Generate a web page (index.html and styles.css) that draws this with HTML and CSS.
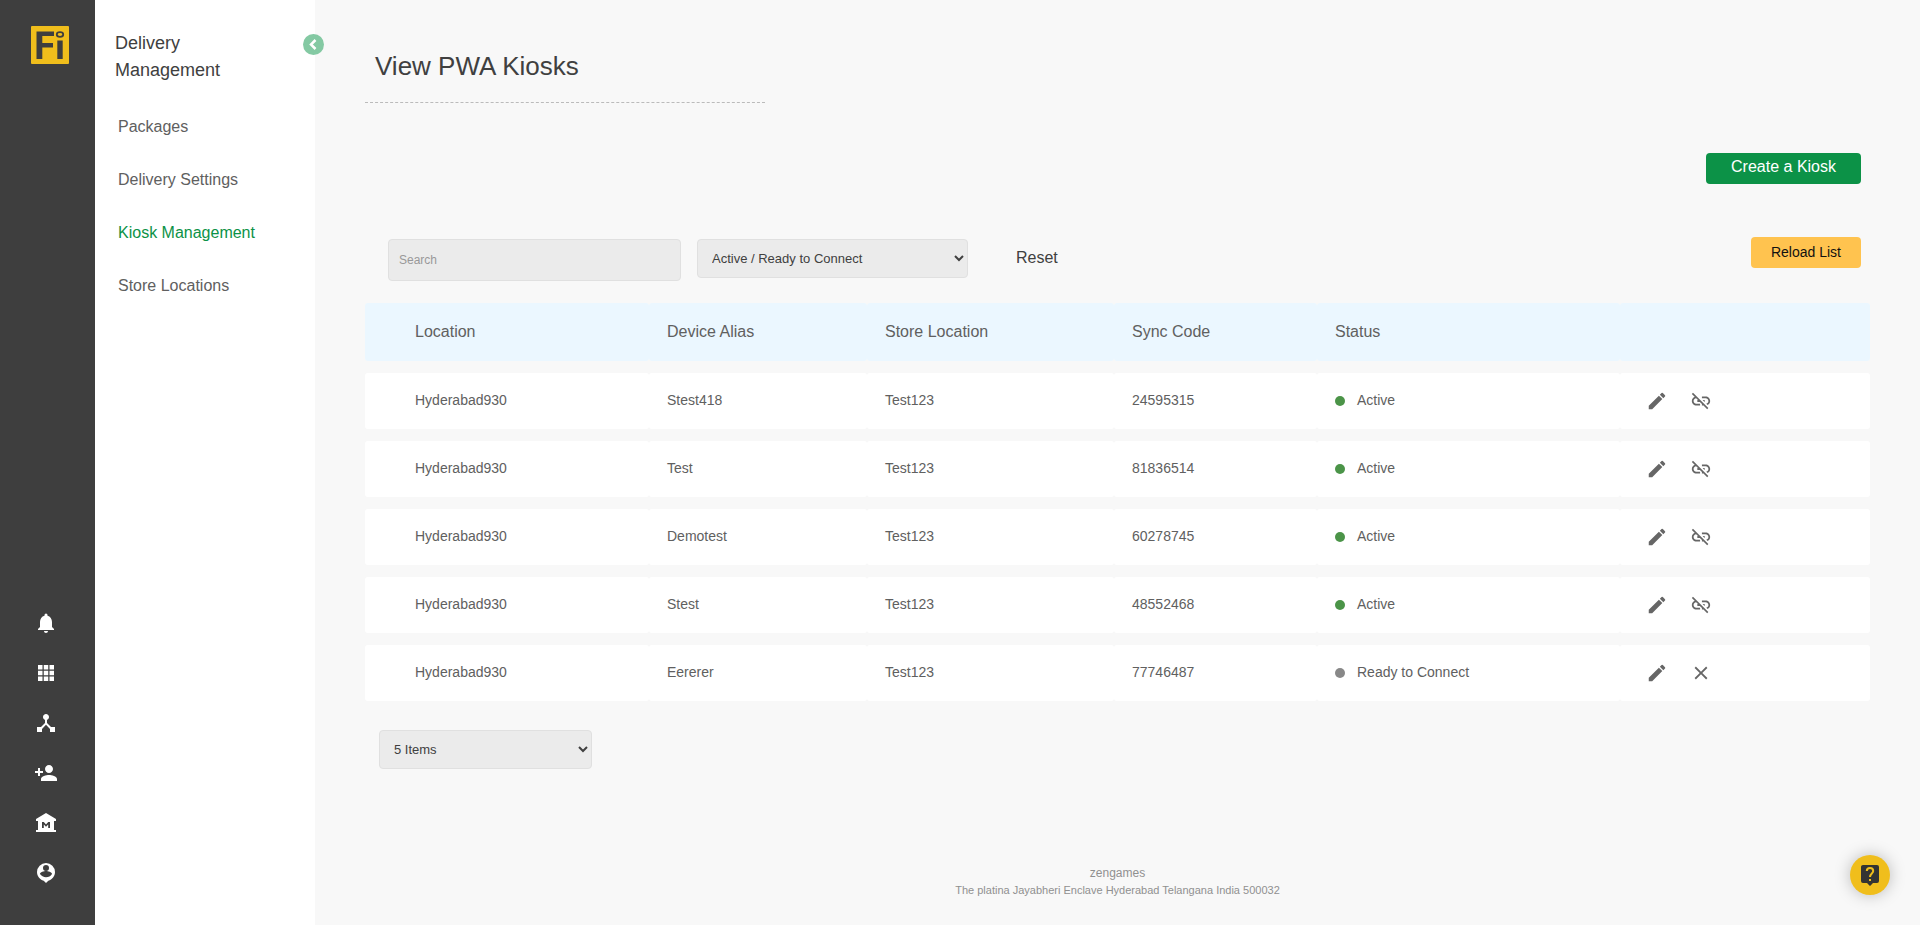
FILE: index.html
```html
<!DOCTYPE html>
<html lang="en">
<head>
<meta charset="utf-8">
<title>View PWA Kiosks</title>
<link rel="stylesheet" href="styles.css">
</head>
<body>
<svg class="sprite" aria-hidden="true">
  <symbol id="pencil" viewBox="0 0 24 24"><path d="M3 17.25V21h3.75L17.81 9.94l-3.75-3.75L3 17.25zM20.71 7.04a1 1 0 0 0 0-1.41l-2.34-2.34a1 1 0 0 0-1.41 0l-1.83 1.83 3.75 3.75 1.83-1.83z"/></symbol>
  <symbol id="unlink" viewBox="0 0 24 24"><path d="M17 7h-4v1.9h4c1.71 0 3.1 1.39 3.1 3.1 0 1.43-.98 2.63-2.31 2.98l1.46 1.46C20.88 15.61 22 13.95 22 12c0-2.76-2.24-5-5-5zm-1 4h-2.19l2 2H16v-2zM2 4.27l3.11 3.11C3.29 8.12 2 9.91 2 12c0 2.76 2.24 5 5 5h4v-1.9H7c-1.71 0-3.1-1.39-3.1-3.1 0-1.59 1.21-2.9 2.76-3.07L8.73 11H8v2h2.73L13 15.27V17h1.73l4.01 4L20 19.74 3.27 3 2 4.27z"/></symbol>
  <symbol id="cross" viewBox="0 0 24 24"><path d="M19 6.41 17.59 5 12 10.59 6.41 5 5 6.41 10.59 12 5 17.59 6.41 19 12 13.41 17.59 19 19 17.59 13.41 12z"/></symbol>
</svg>
<div class="app">
  <nav class="rail" aria-label="Main">
    <a class="logo" href="#" aria-label="Home">
      <svg width="38" height="38" viewBox="0 0 38 38"><rect width="38" height="38" rx="1" fill="#f0be1c"/><g fill="#3e3e3e"><path d="M5.500 5.500H23V10H11.300v7H22v4.500H11.300V33H5.500z"/><path d="M26.300 14.500h5.400V33h-5.400z"/></g><ellipse cx="29" cy="8.500" rx="3.200" ry="2.300" fill="none" stroke="#3e3e3e" stroke-width="1.800"/></svg>
    </a>
    <div class="rail-links">
      <a href="#" aria-label="Notifications"><svg viewBox="0 0 24 24"><path d="M12 22c1.100 0 2-.9 2-2h-4c0 1.100.89 2 2 2zm6-6v-5c0-3.070-1.640-5.640-4.500-6.320V4a1.500 1.500 0 0 0-3 0v.68C7.630 5.360 6 7.920 6 11v5l-2 2v1h16v-1l-2-2z"/></svg></a>
      <a href="#" aria-label="Apps"><svg viewBox="0 0 24 24"><path d="M4 8.500h4.500V4H4zM9.750 8.500h4.500V4h-4.500zM15.500 8.500H20V4h-4.500zM4 14.250h4.500v-4.500H4zM9.750 14.250h4.500v-4.500h-4.500zM15.500 14.250H20v-4.500h-4.500zM4 20h4.500v-4.500H4zM9.750 20h4.500v-4.500h-4.500zM15.500 20H20v-4.500h-4.500z"/></svg></a>
      <a href="#" aria-label="Network"><svg viewBox="0 0 24 24"><path d="m17 16-4-4V8.820C14.160 8.400 15 7.300 15 6c0-1.660-1.340-3-3-3S9 4.340 9 6c0 1.300.84 2.400 2 2.820V12l-4 4H3v5h5v-3.050l4-4.200 4 4.200V21h5v-5h-4z"/></svg></a>
      <a href="#" aria-label="Add person"><svg viewBox="0 0 24 24"><path d="M15 12c2.210 0 4-1.790 4-4s-1.790-4-4-4-4 1.790-4 4 1.790 4 4 4zm-9-2V7H4v3H1v2h3v3h2v-3h3v-2H6zm9 4c-2.670 0-8 1.340-8 4v2h16v-2c0-2.660-5.330-4-8-4z"/></svg></a>
      <a href="#" aria-label="Stores"><svg viewBox="0 0 24 24"><path fill-rule="evenodd" d="m12 2 10 6v2h-2v9h2v2H2v-2h2v-9H2V8zM8 17h1.800v-3.500l2.200 2.300 2.200-2.300V17H16v-6h-1.800L12 13.500 9.800 11H8z"/></svg></a>
      <a href="#" aria-label="Account"><svg viewBox="0 0 24 24"><path fill-rule="evenodd" d="M12 2a9 9 0 0 0-9 9c0 4.170 2.840 7.670 6.690 8.690L12 22l2.310-2.310C18.160 18.670 21 15.170 21 11a9 9 0 0 0-9-9zm0 2a3 3 0 1 1 0 6 3 3 0 0 1 0-6zm0 12.300c-2.500 0-4.710-1.280-6-3.220.03-1.990 4-3.080 6-3.080 1.990 0 5.970 1.090 6 3.080a7.200 7.200 0 0 1-6 3.220z"/></svg></a>
    </div>
  </nav>
  <aside class="side">
    <button class="collapse" type="button" aria-label="Collapse menu"><svg width="21" height="21" viewBox="0 0 21 21"><path d="M12.500 6 8 10.500l4.500 4.500" fill="none" stroke="#fff" stroke-width="2.500"/></svg></button>
    <h2>Delivery Management</h2>
    <ul>
      <li><a href="#">Packages</a></li>
      <li><a href="#">Delivery Settings</a></li>
      <li><a class="current" href="#">Kiosk Management</a></li>
      <li><a href="#">Store Locations</a></li>
    </ul>
  </aside>
  <main class="main">
    <h1>View PWA Kiosks</h1>
    <div class="create-row"><button class="btn create" type="button">Create a Kiosk</button></div>
    <div class="filters">
      <input class="search" type="text" placeholder="Search" aria-label="Search">
      <select class="state" aria-label="Status filter"><option>Active / Ready to Connect</option></select>
      <button class="reset" type="button">Reset</button>
      <button class="btn reload" type="button">Reload List</button>
    </div>
    <table>
      <colgroup><col class="c-location"><col class="c-alias"><col class="c-store"><col class="c-sync"><col class="c-status"><col></colgroup>
      <thead><tr><th>Location</th><th>Device Alias</th><th>Store Location</th><th>Sync Code</th><th>Status</th><td></td></tr></thead>
      <tbody>
        <tr><td>Hyderabad930</td><td>Stest418</td><td>Test123</td><td>24595315</td><td><span class="status active">Active</span></td><td><div class="actions"><button type="button" aria-label="Edit"><svg><use href="#pencil"/></svg></button><button type="button" aria-label="Disconnect"><svg><use href="#unlink"/></svg></button></div></td></tr>
        <tr><td>Hyderabad930</td><td>Test</td><td>Test123</td><td>81836514</td><td><span class="status active">Active</span></td><td><div class="actions"><button type="button" aria-label="Edit"><svg><use href="#pencil"/></svg></button><button type="button" aria-label="Disconnect"><svg><use href="#unlink"/></svg></button></div></td></tr>
        <tr><td>Hyderabad930</td><td>Demotest</td><td>Test123</td><td>60278745</td><td><span class="status active">Active</span></td><td><div class="actions"><button type="button" aria-label="Edit"><svg><use href="#pencil"/></svg></button><button type="button" aria-label="Disconnect"><svg><use href="#unlink"/></svg></button></div></td></tr>
        <tr><td>Hyderabad930</td><td>Stest</td><td>Test123</td><td>48552468</td><td><span class="status active">Active</span></td><td><div class="actions"><button type="button" aria-label="Edit"><svg><use href="#pencil"/></svg></button><button type="button" aria-label="Disconnect"><svg><use href="#unlink"/></svg></button></div></td></tr>
        <tr><td>Hyderabad930</td><td>Eererer</td><td>Test123</td><td>77746487</td><td><span class="status">Ready to Connect</span></td><td><div class="actions"><button type="button" aria-label="Edit"><svg><use href="#pencil"/></svg></button><button type="button" aria-label="Remove"><svg><use href="#cross"/></svg></button></div></td></tr>
      </tbody>
    </table>
    <select class="page-size" aria-label="Items per page"><option>5 Items</option></select>
    <footer><p>zengames</p><p class="address">The platina Jayabheri Enclave Hyderabad Telangana India 500032</p></footer>
  </main>
</div>
<button class="help" type="button" aria-label="Help"><svg width="24" height="24" viewBox="0 0 24 24"><path fill="#333" d="M5 2h14a2 2 0 0 1 2 2v14a2 2 0 0 1-2 2h-4l-3 3-3-3H5a2 2 0 0 1-2-2V4c0-1.100.9-2 2-2z"/><path d="M8.800 8c0-4 6.400-4 6.400 0 0 2.500-3.200 2.500-3.200 6" fill="none" stroke="#f0be1c" stroke-width="2"/><path fill="#f0be1c" d="M11 16h2v2h-2z"/></svg></button>
</body>
</html>
```
FILE: styles.css
```css
* { box-sizing: border-box; }
body {
  margin: 0;
  background: #f8f8f8;
  color: #606060;
  font-family: "Liberation Sans", Arial, sans-serif;
  font-size: 14px;
}
button, input, select { font-family: inherit; }
button { border: 0; padding: 0; background: none; cursor: pointer; }
a { color: inherit; text-decoration: none; }
.sprite { position: absolute; width: 0; height: 0; }
.app { display: flex; min-height: 100vh; }

.rail {
  flex: 0 0 95px;
  display: flex;
  flex-direction: column;
  justify-content: space-between;
  padding: 26px 0 27px;
  background: #3e3e3e;
}
.logo { align-self: center; margin-left: 5px; }
.logo svg { display: block; }
.rail-links { display: flex; flex-direction: column; width: 92px; }
.rail-links a { display: flex; align-items: center; justify-content: center; height: 50px; }
.rail-links svg { width: 24px; height: 24px; fill: #fff; }

.side { position: relative; flex: 0 0 220px; padding: 30px 20px; background: #fff; }
.side h2 { width: 120px; margin: 0 0 33px; color: #404040; font-size: 18px; font-weight: 400; line-height: 27px; }
.side ul { display: flex; flex-direction: column; gap: 33px; margin: 0; padding: 0 3px; list-style: none; }
.side li { line-height: 20px; font-size: 16px; }
.side .current { color: #0c9247; }
.collapse { position: absolute; top: 34px; right: -9px; width: 21px; height: 21px; border-radius: 50%; background: #84c9a3; }
.collapse svg { display: block; }

.main { flex: 1; min-width: 0; display: flex; flex-direction: column; padding: 45px 50px 26px; }
h1 {
  width: 400px;
  margin: 0 0 50px;
  padding: 0 10px 14px;
  border-bottom: 1px dashed #bbb;
  color: #404040;
  font-size: 26px;
  font-weight: 400;
  line-height: 43px;
}
.create-row { display: flex; justify-content: flex-end; margin-bottom: 53px; padding-right: 9px; }
.btn { height: 31px; border-radius: 4px; }
.create { padding: 0 25px 3px; background: #0c9247; color: #fff; font-size: 16px; }
.filters { display: flex; align-items: flex-start; padding: 0 9px 10px 23px; }
.search, .state, .page-size { border: 1px solid #e0e0e0; border-radius: 4px; background: #ebebeb; color: #404040; font-size: 13px; }
.search { width: 293px; height: 42px; margin: 2px 16px 0 0; padding: 0 10px 2px; }
.search::placeholder { color: #999; font-size: 12px; }
.state { width: 271px; height: 39px; margin: 2px 48px 0 0; padding: 0 10px; }
.reset { height: 42px; color: #404040; font-size: 16px; }
.reload { margin-left: auto; padding: 0 20px 1px; background: #ffc34f; color: #111; font-size: 14px; }

table { width: 100%; border-spacing: 0 12px; table-layout: fixed; }
.c-location { width: 284px; }
.c-alias { width: 218px; }
.c-store { width: 247px; }
.c-sync { width: 203px; }
.c-status { width: 303px; }
th, td { height: 56px; padding: 0 0 2px 18px; border-radius: 3px; background: #fff; text-align: left; font-weight: 400; }
thead th, thead td { height: 58px; padding-bottom: 0; background: #ebf7ff; font-size: 16px; }
th:first-child, td:first-child { padding-left: 50px; }
.status { display: flex; align-items: center; gap: 12px; }
.status::before { content: ""; width: 10px; height: 10px; margin-top: 2px; border-radius: 50%; background: #888; }
.status.active::before { background: #4b9448; }
.actions { display: flex; gap: 22px; padding: 2px 0 0 8px; }
.actions svg { display: block; width: 22px; height: 22px; fill: #666; }
.page-size { width: 213px; height: 39px; margin: 17px 0 0 14px; padding: 0 10px; }
footer { margin-top: auto; color: #909090; text-align: center; }
footer p { margin: 0; font-size: 12px; line-height: 17px; }
footer .address { font-size: 11px; }

.help {
  position: fixed;
  right: 30px;
  bottom: 30px;
  display: flex;
  align-items: center;
  justify-content: center;
  width: 40px;
  height: 40px;
  border-radius: 50%;
  background: #f0be1c;
  box-shadow: 0 0 16px rgba(0, 0, 0, .25);
}
```
